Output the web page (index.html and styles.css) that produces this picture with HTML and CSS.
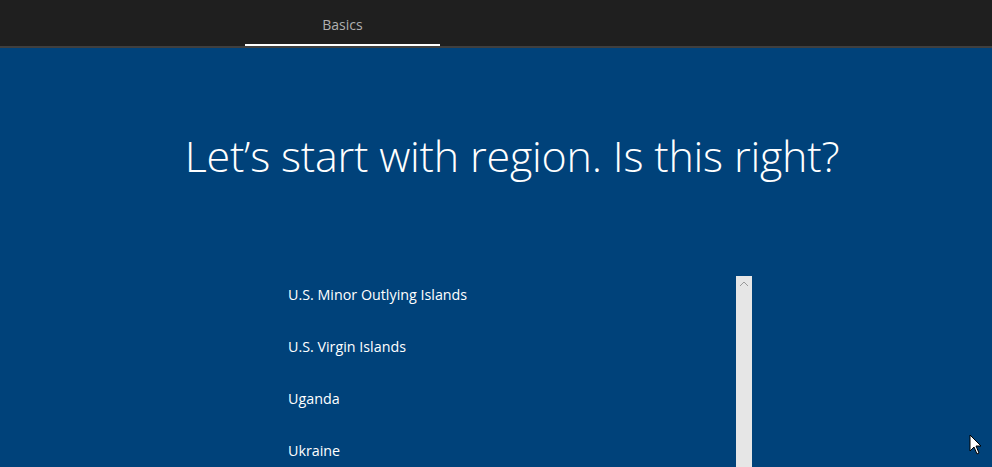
FILE: index.html
```html
<!DOCTYPE html>
<html>
<head>
<meta charset="utf-8">
<link rel="stylesheet" href="styles.css">
</head>
<body>
<div class="topbar">
  <div class="tab">Basics</div>
</div>
<div class="main">
  <h1 class="title">Let’s start with region. Is this right?</h1>
  <div class="listwrap">
    <ul class="list">
      <li>U.S. Minor Outlying Islands</li>
      <li>U.S. Virgin Islands</li>
      <li>Uganda</li>
      <li>Ukraine</li>
    </ul>
    <div class="scrollbar">
      <svg class="arrow" width="10" height="6" viewBox="0 0 10 6"><path d="M1 5 L5 1 L9 5" fill="none" stroke="#9a9a9a" stroke-width="1"/></svg>
    </div>
  </div>
  <svg class="cursor" width="14" height="22" viewBox="0 0 14 22"><path d="M1 1 L1 17 L5 13 L8 20 L10 19 L7 12 L12 12 Z" fill="#fff" stroke="#000" stroke-width="1"/></svg>
</div>
</body>
</html>
```
FILE: styles.css
```css
html, body { margin: 0; padding: 0; }
body {
  width: 992px; height: 467px; overflow: hidden;
  background: #00427a;
  font-family: "Open Sans", "Noto Sans", sans-serif;
}
.topbar {
  height: 46px;
  background: #1f1f1f;
  border-bottom: 2px solid #3f3f3f;
  box-sizing: content-box;
  padding-left: 245px;
  display: flex;
}
.tab {
  width: 195px;
  height: 46px;
  box-sizing: border-box;
  border-bottom: 2px solid #fff;
  margin-bottom: -1px;
  color: #b0b0b0;
  font-size: 14px;
  text-align: center;
  padding-top: 15px;
}
.main { position: relative; height: 419px; overflow: hidden; }
.title {
  margin: 0;
  padding-top: 78px;
  padding-left: 32px;
  text-align: center;
  color: #fff;
  font-weight: 300;
  font-size: 43px;
  line-height: 60px;
  letter-spacing: -0.2px;
}
.listwrap {
  display: flex;
  margin-top: 90px;
  margin-left: 288px;
}
.list {
  list-style: none;
  margin: 0; padding: 0;
  width: 448px;
  padding-top: 9px;
}
.list li {
  color: #fff;
  font-size: 14.3px;
  height: 52px;
  line-height: 20px;
}
.scrollbar {
  width: 16px;
  height: 191px;
  background: #e6e6e6;
  display: flex;
  justify-content: center;
  padding-top: 5px;
  box-sizing: border-box;
}
.arrow { display: block; }
.cursor { position: absolute; left: 969px; top: 386px; }
```
